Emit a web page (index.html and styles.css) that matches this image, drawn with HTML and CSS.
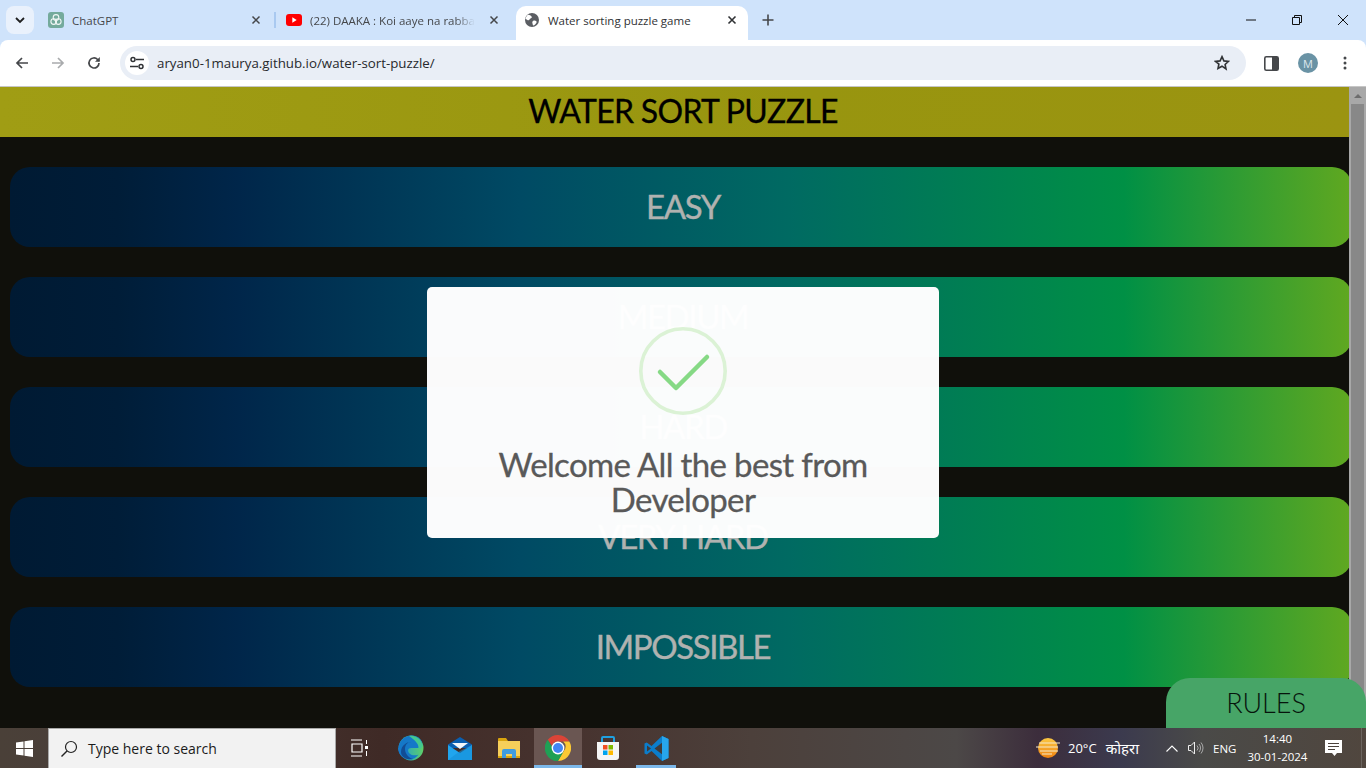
FILE: index.html
```html
<!DOCTYPE html>
<html lang="en">
<head>
<meta charset="utf-8">
<title>Water sorting puzzle game</title>
<link rel="stylesheet" href="styles.css">
</head>
<body>
<div class="tabstrip">
  <button class="tabsearch"><svg width="12" height="12" viewBox="0 0 12 12"><path d="M2 4l4 4 4-4" fill="none" stroke="#1f1f1f" stroke-width="1.8"/></svg></button>
  <div class="tab tab-one">
    <svg class="fav" width="16" height="16" viewBox="0 0 16 16"><rect width="16" height="16" rx="3" fill="#74aa9c"/><g fill="none" stroke="#fff" stroke-width="1.1" opacity=".9"><circle cx="8" cy="5.4" r="2.8"/><circle cx="5.7" cy="9.6" r="2.8"/><circle cx="10.3" cy="9.6" r="2.8"/></g></svg>
    <span class="tabtitle t-one">ChatGPT</span>
    <svg class="x" width="10" height="10" viewBox="0 0 10 10"><path d="M1.5 1.5l7 7M8.500 1.500l-7 7" stroke="#45474a" stroke-width="1.500"/></svg>
  </div>
  <span class="tabsep"></span>
  <div class="tab tab-two">
    <svg class="fav" width="16" height="12" viewBox="0 0 16 12"><rect width="16" height="12" rx="3" fill="#f00"/><path d="M6.300 3.300l4.400 2.700-4.400 2.700z" fill="#fff"/></svg>
    <span class="tabtitle t-two">(22) DAAKA : Koi aaye na rabba</span>
    <svg class="x" width="10" height="10" viewBox="0 0 10 10"><path d="M1.5 1.5l7 7M8.500 1.500l-7 7" stroke="#45474a" stroke-width="1.500"/></svg>
  </div>
  <div class="tab tab-active">
    <svg class="fav" width="14" height="14" viewBox="0 0 14 14"><circle cx="7" cy="7" r="7" fill="#5b5e63"/><path d="M3 1.800c2 .3 3.500 1 3.800 2.200.2 1-1 1.300-1.800 1.800-.7.500-.5 1.500-1.500 1.500-1 0-2-1-3-1.300C.8 4.500 1.500 2.800 3 1.800zM8 8c1-.6 2.500-.5 3.300.2.700.6.200 1.500-.4 2.200-.7.800-1.500 2-2.400 2-.8 0-.7-1.200-1-2C7.200 9.500 7.200 8.500 8 8z" fill="#fff"/></svg>
    <span class="tabtitle t-three">Water sorting puzzle game</span>
    <svg class="x" width="10" height="10" viewBox="0 0 10 10"><path d="M1.5 1.5l7 7M8.500 1.500l-7 7" stroke="#303235" stroke-width="1.600"/></svg>
  </div>
  <svg class="plus" width="12" height="12" viewBox="0 0 12 12"><path d="M6 .5v11M.5 6h11" stroke="#45474a" stroke-width="1.600"/></svg>
  <div class="winctl">
    <svg width="12" height="12" viewBox="0 0 12 12"><path d="M1 6h10" stroke="#111" stroke-width="1"/></svg>
    <svg width="12" height="12" viewBox="0 0 12 12"><path d="M1.500 3.500h7v7h-7zM3.500 3.500v-2h7v7h-2" fill="none" stroke="#111"/></svg>
    <svg width="12" height="12" viewBox="0 0 12 12"><path d="M1 1l10 10M11 1L1 11" stroke="#111"/></svg>
  </div>
</div>
<div class="toolbar">
  <svg class="navicon nav-back" width="16" height="16" viewBox="0 0 16 16"><path d="M14 8H3M8 3L3 8l5 5" fill="none" stroke="#45474a" stroke-width="1.700"/></svg>
  <svg class="navicon nav-fwd" width="16" height="16" viewBox="0 0 16 16"><path d="M2 8h11M8 3l5 5-5 5" fill="none" stroke="#a9abad" stroke-width="1.700"/></svg>
  <svg class="navicon nav-reload" width="16" height="16" viewBox="0 0 16 16"><path d="M13 8a5 5 0 1 1-1.400-3.500L13 6" fill="none" stroke="#45474a" stroke-width="1.700"/><path d="M13.800 2v4.800H9z" fill="#45474a"/></svg>
  <div class="omnibox">
    <span class="sitebtn"><svg width="14" height="14" viewBox="0 0 14 14"><g fill="none" stroke="#303235" stroke-width="1.500"><path d="M6 3.500h8M0 10.500h8"/><circle cx="3" cy="3.500" r="2"/><circle cx="11" cy="10.500" r="2"/></g></svg></span>
    <span class="url">aryan0-1maurya.github.io/water-sort-puzzle/</span>
    <svg class="star" width="16" height="16" viewBox="0 0 16 16"><path d="M8 1.700l1.900 4.200 4.600.5-3.400 3.100.9 4.500L8 11.200l-4 2.300.9-4.500L1.500 6.400l4.600-.5z" fill="none" stroke="#303235" stroke-width="1.600"/></svg>
  </div>
  <svg class="sidepanel" width="15" height="15" viewBox="0 0 15 15"><rect x=".8" y=".8" width="13.400" height="13.400" rx="1.500" fill="#fff" stroke="#45474a" stroke-width="1.600"/><rect x="8" y="1" width="6" height="13" fill="#45474a"/></svg>
  <span class="avatar">M</span>
  <svg class="kebab" width="4" height="14" viewBox="0 0 4 14"><g fill="#45474a"><circle cx="2" cy="2" r="1.500"/><circle cx="2" cy="7" r="1.500"/><circle cx="2" cy="12" r="1.500"/></g></svg>
</div>
<div class="viewport">
  <main class="page">
    <h1 class="title">WATER SORT PUZZLE</h1>
    <div class="levels">
      <a class="level">EASY</a>
      <a class="level">MEDIUM</a>
      <a class="level">HARD</a>
      <a class="level">VERY HARD</a>
      <a class="level">IMPOSSIBLE</a>
    </div>
  </main>
  <div class="scrollbar">
    <span class="arrow"></span>
    <span class="thumb"></span>
  </div>
  <div class="modal">
    <svg class="okicon" width="88" height="88" viewBox="0 0 88 88"><circle cx="44" cy="44" r="42.200" fill="none" stroke="#dbf2d5" stroke-width="3.600"/><path d="M21 45l16 16 31-31" fill="none" stroke="#86d985" stroke-width="4.500" stroke-linecap="round" stroke-linejoin="round"/></svg>
    <p class="modaltext">Welcome All the best from Developer</p>
  </div>
  <button class="rules">RULES</button>
</div>
<footer class="taskbar">
  <span class="startbtn"><svg width="17" height="17" viewBox="0 0 17 17"><path d="M0 2.500l7.500-1v6.500H0zM8.500 1.300L17 0v8H8.500zM0 9h7.500v6.500l-7.500-1zM8.500 9H17v8l-8.500-1.300z" fill="#fff"/></svg></span>
  <div class="search">
    <svg width="18" height="18" viewBox="0 0 18 18"><circle cx="11" cy="7" r="5.500" fill="none" stroke="#222" stroke-width="1.200"/><path d="M7 11l-5.500 5.500" stroke="#222" stroke-width="1.400"/></svg>
    <span>Type here to search</span>
  </div>
  <div class="apps">
    <span class="app app-first"><svg width="18" height="18" viewBox="0 0 18 18"><g fill="none" stroke="#fff" stroke-width="1.200"><path d="M0 1h11M0 17h11M1 5h10v8H1z"/></g><rect x="14" y="7" width="3" height="3" fill="#fff"/><path d="M15.500 1v4M15.500 12v5" stroke="#fff"/></svg></span>
    <span class="app"><svg width="26" height="26" viewBox="0 0 26 26"><defs><linearGradient id="eg" x1="0" y1="0" x2="1" y2="0"><stop offset="0" stop-color="#1a9bd8"/><stop offset="1" stop-color="#5fd068"/></linearGradient></defs><circle cx="13" cy="13" r="12.500" fill="url(#eg)"/><path d="M.5 13C1 5 8 .5 14 .5c5 0 9 3 10 7 1 3-1 5.500-4 5.500h-7c-3 0-4 3-1.500 5.500 2 2 6 2.500 9 1-2 3-5.500 5-9 5-6 0-11.500-5-11.500-11.500z" fill="#1578c8"/><path d="M3 17C3 10 9 7 13 7c-3 0-6 2.500-6 7 0 5 4 9 8 10-6 1.500-12-2-12-7z" fill="#114d95"/><path d="M11 1c6-1.500 12 2.500 13.500 8.500C25 12 23 14 20 14c2-4-3-9-9-13z" fill="#43c890"/></svg></span>
    <span class="app"><svg width="24" height="23" viewBox="0 0 24 23"><path d="M12 0L0 7.500V11h24V7.500z" fill="#0a5fb0"/><path d="M0 8l12 8 12-8v15H0z" fill="#20a5ee"/><path d="M4 6h16l-8 6z" fill="#f2f7fb"/><path d="M12 14L24 8v15H0z" fill="#1590d8" opacity=".6"/></svg></span>
    <span class="app"><svg width="22" height="20" viewBox="0 0 22 20"><path d="M0 1a1 1 0 0 1 1-1h7l2 3H0z" fill="#d9a40e"/><rect y="3" width="22" height="17" fill="#f7cf5a"/><rect y="18" width="22" height="2" fill="#d9a40e"/><path d="M4 20v-7a2 2 0 0 1 2-2h10a2 2 0 0 1 2 2v7h-4v-4H8v4z" fill="#3f9be0"/></svg></span>
    <span class="app app-active"><svg width="26" height="26" viewBox="0 0 26 26"><path d="M13 0a13 13 0 0 1 11.300 6.500H13a6.500 6.500 0 0 0-6.100 4.300L2.800 4.800A13 13 0 0 1 13 0z" fill="#db4437"/><path d="M24.300 6.500A13 13 0 0 1 13 26l5.600-9.700a6.500 6.500 0 0 0-.4-9.800z" fill="#fcc934"/><path d="M13 26A13 13 0 0 1 2.800 4.800l5.600 9.700a6.500 6.500 0 0 0 10.200 1.800z" fill="#1fa055"/><circle cx="13" cy="13" r="6.400" fill="#fff"/><circle cx="13" cy="13" r="5" fill="#4285f4"/></svg></span>
    <span class="app app-store"><svg width="24" height="24" viewBox="0 0 24 24"><path d="M6 7V2a1 1 0 0 1 1-1h10a1 1 0 0 1 1 1v5" fill="none" stroke="#1fa0e0" stroke-width="2"/><path d="M1 6h22v15a3 3 0 0 1-3 3H4a3 3 0 0 1-3-3z" fill="#f5f5f5"/><rect x="7" y="9" width="4.500" height="4.500" fill="#f25022"/><rect x="12.500" y="9" width="4.500" height="4.500" fill="#7fba00"/><rect x="7" y="14.500" width="4.500" height="4.500" fill="#00a4ef"/><rect x="12.500" y="14.500" width="4.500" height="4.500" fill="#ffb900"/></svg></span>
    <span class="app app-open"><svg width="25" height="25" viewBox="0 0 25 25"><path d="M18 0l6.500 3.100v18.800L18 25 7.500 15l-4.700 3.600L.5 17.400v-9.800l2.300-1.200L7.500 10z" fill="#0b7dcb"/><path d="M18 0l6.500 3.100v18.800L18 25z" fill="#27a5ec"/><path d="M18 6.800l-7.500 5.700L18 18.200z" fill="#3f3a3a"/><path d="M3 9.400l4 3.100-4 3.100z" fill="#3f3a3a"/></svg></span>
  </div>
  <div class="tray">
    <svg class="sun" width="24" height="20" viewBox="0 0 24 20"><defs><linearGradient id="sg" x1="0" y1="0" x2="0" y2="1"><stop offset="0" stop-color="#fbc842"/><stop offset="1" stop-color="#ee8212"/></linearGradient></defs><circle cx="12" cy="10" r="10" fill="url(#sg)"/><path d="M3 5h21M0 9h22M4 13h18M6 16h10" stroke="#f5e9c8" stroke-width="1.200"/></svg>
    <span class="temp">20°C</span>
    <span class="cond">कोहरा</span>
    <svg class="chev" width="12" height="7" viewBox="0 0 12 7"><path d="M.5 6.500L6 1l5.500 5.500" fill="none" stroke="#fff" stroke-width="1.100"/></svg>
    <svg class="spk" width="16" height="14" viewBox="0 0 16 14"><path d="M.5 4.500h2.500L6.500 1v12L3 9.500H.5z" fill="none" stroke="#eee"/><path d="M9 4.500a3.500 3.500 0 0 1 0 5M11 3a6 6 0 0 1 0 8M13 1.500a8.500 8.500 0 0 1 0 11" fill="none" stroke="#aaa"/></svg>
    <span class="lang">ENG</span>
    <div class="clock"><span>14:40</span><span>30-01-2024</span></div>
    <svg class="notif" width="17" height="16" viewBox="0 0 17 16"><path d="M0 0h17v13H12l-2.500 3L7 13H0z" fill="#fff"/><path d="M3 3.500h11M3 6.500h11M3 9.500h7" stroke="#4b423c"/></svg>
    <span class="desk"></span>
  </div>
</footer>
</body>
</html>
```
FILE: styles.css
```css
* { box-sizing: border-box; }
html, body { margin: 0; padding: 0; }
body {
  width: 1366px;
  height: 768px;
  overflow: hidden;
  display: flex;
  flex-direction: column;
  font-family: "Open Sans", "Noto Sans", sans-serif;
  background: #cfe3fb;
}
svg { display: block; flex: none; }

/* Browser tab strip */
.tabstrip {
  height: 40px;
  flex: none;
  display: flex;
  align-items: flex-end;
  background: #cfe3fb;
  padding-left: 6px;
}
.tabsearch {
  width: 28px;
  height: 28px;
  margin-bottom: 6px;
  border: 0;
  border-radius: 8px;
  background: #e9f1fc;
  display: flex;
  align-items: center;
  justify-content: center;
  padding: 0;
}
.tab {
  height: 34px;
  padding-bottom: 6px;
  display: flex;
  align-items: center;
  flex: none;
  font-size: 11.5px;
  color: #45474a;
}
.tab-one { width: 222px; margin-left: 14px; }
.tab-one .fav { margin-right: 8px; }
.tab-one .x { margin-left: auto; margin-right: 9px; }
.tabsep { width: 2px; height: 16px; background: #a9c9f0; margin: 0 0 12px 4px; flex: none; }
.tab-two { width: 222px; margin-left: 10px; }
.tab-two .fav { margin-right: 8px; }
.t-two {
  width: 165px;
  white-space: nowrap;
  overflow: hidden;
  -webkit-mask-image: linear-gradient(to right, #000 88%, transparent);
  mask-image: linear-gradient(to right, #000 88%, transparent);
}
.tab-two .x { margin-left: auto; margin-right: 9px; }
.tab-active {
  width: 232px;
  margin-left: 8px;
  padding-left: 9px;
  background: #fff;
  border-radius: 10px 10px 0 0;
  color: #303235;
}
.tab-active .fav { margin-right: 9px; }
.tab-active .x { margin-left: auto; margin-right: 11px; }
.plus { margin: 0 0 14px 14px; }
.winctl {
  margin-left: auto;
  margin-bottom: 14px;
  display: flex;
  gap: 34px;
  padding-right: 17px;
}
.winctl svg { width: 12px; }

/* Toolbar */
.toolbar {
  height: 47px;
  flex: none;
  display: flex;
  align-items: center;
  background: #fff;
  border-radius: 8px 8px 0 0;
  border-bottom: 1px solid #c6c6c6;
}
.nav-back { margin-left: 14px; }
.nav-fwd { margin-left: 20px; }
.nav-reload { margin-left: 20px; }
.omnibox {
  width: 1126px;
  height: 34px;
  margin-left: 18px;
  border-radius: 17px;
  background: #e9eef6;
  display: flex;
  align-items: center;
  padding: 0 16px 0 5px;
}
.sitebtn {
  width: 24px;
  height: 24px;
  border-radius: 50%;
  background: #fff;
  display: flex;
  align-items: center;
  justify-content: center;
}
.url { margin-left: 8px; font-size: 13.3px; color: #27292c; }
.star { margin-left: auto; }
.sidepanel { margin-left: 18px; }
.avatar {
  width: 20px;
  height: 20px;
  margin-left: 19px;
  border-radius: 50%;
  background: #6a93a5;
  color: #dfe9ee;
  font-size: 11px;
  display: flex;
  align-items: center;
  justify-content: center;
}
.kebab { margin-left: 25px; }

/* Page */
.viewport {
  flex: 1;
  min-height: 0;
  display: flex;
  position: relative;
}
.page {
  width: 1349px;
  flex: none;
  overflow: hidden;
  background: #10100b;
  font-family: "Lato", "Open Sans", sans-serif;
}
.title {
  margin: 0;
  height: 50px;
  padding-left: 17px;
  background: linear-gradient(to right, #a09d14, #98950f 60%, #9b9411);
  color: #000;
  font-size: 32px;
  font-weight: 400;
  letter-spacing: -.7px;
  -webkit-text-stroke: .3px #000;
  line-height: 47px;
  text-align: center;
}
.levels {
  display: flex;
  flex-direction: column;
  gap: 30px;
  padding: 30px 0 0 10px;
}
.level {
  width: 1342px;
  height: 80px;
  flex: none;
  padding-left: 4px;
  border-radius: 20px;
  background: linear-gradient(to right, #001a33 0%, #001d38 8%, #00264a 17%, #004a64 38%, #006a62 58%, #009045 83%, #60a820 100%);
  color: #b0b2b0;
  font-size: 33px;
  font-weight: 400;
  letter-spacing: -1.4px;
  -webkit-text-stroke: .4px #b0b2b0;
  line-height: 78px;
  text-align: center;
}
.scrollbar {
  width: 17px;
  flex: none;
  background: #a8a8a8;
  display: flex;
  flex-direction: column;
  align-items: center;
  padding: 0 1px;
}
.arrow {
  margin-top: 7px;
  width: 0;
  height: 0;
  border-left: 4px solid transparent;
  border-right: 4px solid transparent;
  border-bottom: 4px solid #6d6d6d;
}
.thumb {
  margin-top: 6px;
  width: 13px;
  height: 640px;
  background: #888;
}
.modal {
  position: absolute;
  left: 427px;
  top: 200px;
  width: 512px;
  height: 251px;
  border-radius: 5px;
  background: rgba(255, 255, 255, .98);
  padding-top: 40px;
  display: flex;
  flex-direction: column;
  align-items: center;
}
.modaltext {
  margin: 32px 0 0;
  width: 420px;
  color: #595959;
  font-family: "Lato", "Open Sans", sans-serif;
  font-size: 33px;
  font-weight: 400;
  letter-spacing: -.65px;
  -webkit-text-stroke: .3px #595959;
  line-height: 35px;
  text-align: center;
}
.rules {
  position: absolute;
  right: 0;
  bottom: 0;
  width: 200px;
  height: 50px;
  border: 0;
  border-radius: 24px 24px 0 0;
  background: #47a567;
  color: #06140c;
  font-family: "Lato", "Open Sans", sans-serif;
  font-size: 27px;
  font-weight: 300;
  padding: 0 0 2px;
}

/* Taskbar */
.taskbar {
  height: 40px;
  flex: none;
  display: flex;
  background: linear-gradient(to right, #4a4038 0%, #4a3f39 4%, #3f2a26 28%, #47332f 42%, #4c403b 55%, #4c4847 70%, #3c2d3c 76%, #3b3a4e 82%, #4a4a48 88%, #50463e 100%);
  color: #fff;
}
.startbtn {
  width: 48px;
  display: flex;
  align-items: center;
  justify-content: center;
}
.search {
  width: 288px;
  display: flex;
  align-items: center;
  gap: 10px;
  padding-left: 11px;
  background: #f2f2f2;
  border: 1px solid #a9a9a9;
  border-width: 1px 1px 0;
  color: #1b1b1b;
  font-size: 14px;
}
.apps { display: flex; }
.app {
  width: 49px;
  display: flex;
  align-items: center;
  justify-content: center;
  border-bottom: 3px solid transparent;
  padding-top: 3px;
}
.app-first { width: 48px; margin-right: 2px; }
.app-active { width: 48px; margin-left: 1px; background: #6a5652; border-bottom-color: #7cb8ea; }
.app-store { margin-left: 1px; }
.app-open { width: 40px; margin-left: 4px; border-bottom-color: #7cb8ea; }
.tray {
  flex: 1;
  min-width: 0;
  display: flex;
  align-items: center;
  font-size: 11.5px;
}
.sun { margin-left: 360px; }
.temp { margin-left: 8px; font-size: 13px; white-space: nowrap; }
.cond { margin-left: 9px; font-size: 15px; white-space: nowrap; }
.chev { margin-left: 27px; }
.spk { margin-left: 10px; }
.lang { margin-left: 9px; }
.clock {
  margin-left: 11px;
  width: 60px;
  flex: none;
  display: flex;
  flex-direction: column;
  align-items: center;
  line-height: 18px;
  white-space: nowrap;
}
.notif { margin-left: 18px; }
.desk { width: 1px; height: 40px; margin-left: auto; margin-right: 4px; background: #6b645e; }
```
